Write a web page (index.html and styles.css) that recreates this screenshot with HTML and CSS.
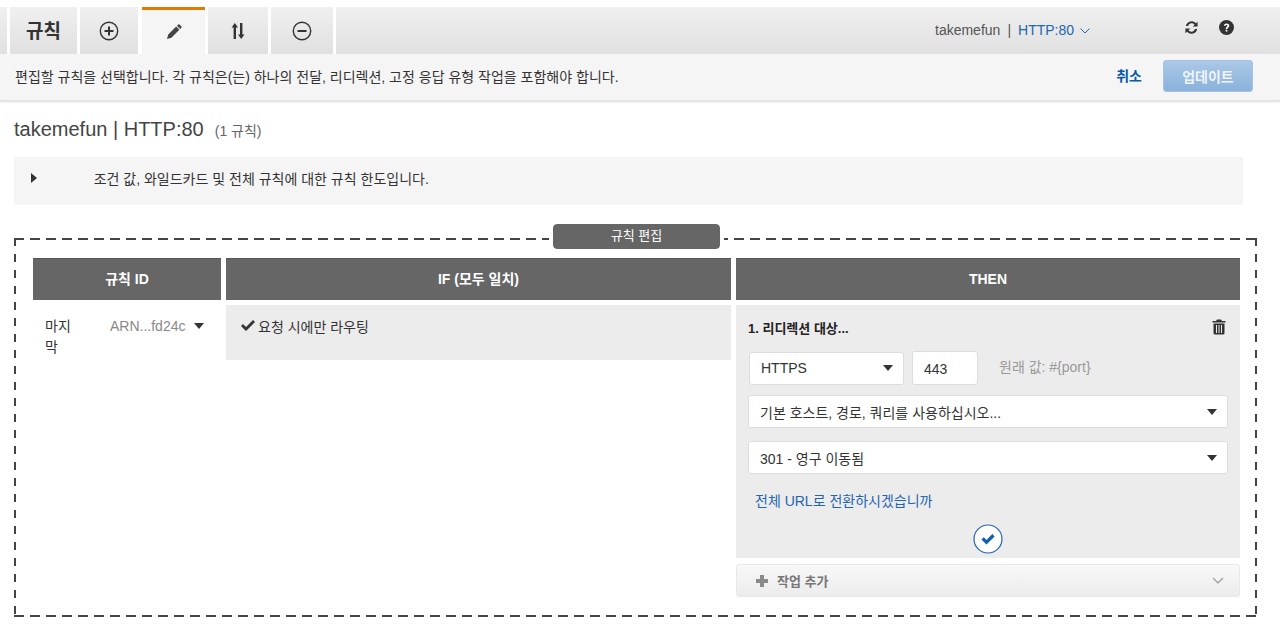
FILE: index.html
```html
<!DOCTYPE html>
<html lang="ko">
<head>
    <meta charset="UTF-8">
    <title>규칙 편집</title>
    <link rel="stylesheet" href="styles.css">
</head>
<body>

    <!-- Tab bar -->
    <div class="tabbar">
        <div class="tab tab-edge"></div>
        <div class="tab tab-title">규칙</div>
        <div class="tab tab-plus">
            <svg width="20" height="20" viewBox="0 0 20 20"><circle cx="10" cy="10" r="8.7" fill="none" stroke="#333" stroke-width="1.4"/><path d="M10 5.5v9M5.5 10h9" stroke="#333" stroke-width="2"/></svg>
        </div>
        <div class="tab tab-pencil active">
            <svg width="16" height="16" viewBox="0 0 16 16"><path d="M1 15l1.2-4.4 8-8 3.2 3.2-8 8zM11 1.8l1.2-1.2a1 1 0 0 1 1.3 0l1.9 1.9a1 1 0 0 1 0 1.3L14.200 5z" fill="#444"/></svg>
        </div>
        <div class="tab tab-sort">
            <svg width="14" height="18" viewBox="0 0 14 18"><path d="M3.800 1L7 5.500H5v11.500H2.600V5.500H.6zM10.200 17L7 12.500h2V1h2.400v11.500h2z" fill="#333"/></svg>
        </div>
        <div class="tab tab-minus">
            <svg width="20" height="20" viewBox="0 0 20 20"><circle cx="10" cy="10" r="8.700" fill="none" stroke="#333" stroke-width="1.400"/><path d="M5.500 10h9" stroke="#333" stroke-width="2"/></svg>
        </div>
        <div class="tab-rest">
            <div class="lb-name">
                takemefun<span class="lb-sep">|</span><span class="lb-port">HTTP:80</span>
                <svg width="10" height="6" viewBox="0 0 10 6"><path d="M.5.500L5 5l4.500-4.500" fill="none" stroke="#1f66b0" stroke-width="1"/></svg>
            </div>
            <svg class="icon-refresh" width="15" height="15" viewBox="0 0 16 16"><path d="M2 6.500A6.200 6.200 0 0 1 12.800 3.500L14.500 1.800V7H9.300l2-2A4 4 0 0 0 4.300 6.500zM14 9.500A6.200 6.200 0 0 1 3.200 12.500L1.500 14.200V9h5.200l-2 2a4 4 0 0 0 7-1.500z" fill="#333"/></svg>
            <svg class="icon-help" width="15" height="15" viewBox="0 0 16 16"><circle cx="8" cy="8" r="8" fill="#333"/><path d="M5.200 6.200C5.300 4.500 6.500 3.600 8.100 3.600c1.700 0 2.900 1 2.900 2.400 0 2-2.100 2-2.100 3.500H7.100C7.100 7.300 9 7.200 9 6.100c0-.6-.4-.9-1-.9-.7 0-1 .4-1.100 1z" fill="#fff"/><rect x="7.100" y="10.400" width="1.800" height="1.900" fill="#fff"/></svg>
        </div>
    </div>

    <!-- Action bar -->
    <div class="actionbar">
        <span class="action-text">편집할 규칙을 선택합니다. 각 규칙은(는) 하나의 전달, 리디렉션, 고정 응답 유형 작업을 포함해야 합니다.</span>
        <span class="cancel">취소</span>
        <button class="update">업데이트</button>
    </div>

    <div class="content">
        <h2 class="title">takemefun | HTTP:80<small>(1 규칙)</small></h2>

        <div class="info">
            <span class="caret-right"></span>
            조건 값, 와일드카드 및 전체 규칙에 대한 규칙 한도입니다.
        </div>

        <div class="editbox">
            <div class="pill">규칙 편집</div>
            <div class="rules">
                <div class="head">규칙 ID</div>
                <div class="head">IF (모두 일치)</div>
                <div class="head">THEN</div>

                <div class="rule-id">
                    <span class="rule-last">마지막</span>
                    <span class="rule-arn">ARN...fd24c</span>
                    <span class="caret rule-caret"></span>
                </div>

                <div class="if-cell">
                    <svg width="16" height="13" viewBox="0 0 16 13"><path d="M1 7l2-2 3 3 7-7 2 2-9 9z" fill="#333"/></svg>
                    요청 시에만 라우팅
                </div>

                <div class="then-col">
                    <div class="then-cell">
                        <div class="then-title">
                            <span>1. 리디렉션 대상...</span>
                            <svg width="14" height="16" viewBox="0 0 14 16"><path d="M5 .5h4l1 1.500h3.500v1.500H.5V2H4zM1.500 4.500h11V14a1.500 1.500 0 0 1-1.500 1.500H3A1.500 1.500 0 0 1 1.500 14z" fill="#333"/><path d="M4.500 6v8M7 6v8M9.500 6v8" stroke="#ececec" stroke-width="1"/></svg>
                        </div>
                        <div class="row-port">
                            <div class="select select-proto">HTTPS<span class="caret"></span></div>
                            <div class="port-input">443</div>
                            <span class="port-hint">원래 값: #{port}</span>
                        </div>
                        <div class="select select-wide">기본 호스트, 경로, 쿼리를 사용하십시오...<span class="caret"></span></div>
                        <div class="select select-wide select-code">301 - 영구 이동됨<span class="caret"></span></div>
                        <a class="full-url">전체 URL로 전환하시겠습니까</a>
                        <div class="confirm">
                            <svg width="30" height="30" viewBox="0 0 30 30"><circle cx="15" cy="15" r="14" fill="#fff" stroke="#1f66b0" stroke-width="1.200"/><path d="M8.500 15.500l2.300-2.300 2.700 2.700 5.800-5.800 2.300 2.300-8.100 8.100z" fill="#0f5fb0"/></svg>
                        </div>
                    </div>
                    <div class="add-action">
                        <svg width="14" height="14" viewBox="0 0 14 14"><path d="M5 1h4v4h4v4H9v4H5V9H1V5h4z" fill="#8a8a8a"/></svg>
                        <span>작업 추가</span>
                        <svg class="add-chevron" width="12" height="7" viewBox="0 0 12 7"><path d="M1 1l5 5 5-5" fill="none" stroke="#999" stroke-width="1.200"/></svg>
                    </div>
                </div>
            </div>
        </div>
    </div>

</body>
</html>
```

FILE: styles.css
```css
* {
    box-sizing: border-box;
}
body {
    margin: 0;
    padding-top: 7px;
    background-color: #fff;
    color: #333;
    font-family: "Liberation Sans", "Noto Sans CJK KR", sans-serif;
    font-size: 14px;
    overflow: hidden;
}

/* Tab bar */
.tabbar {
    display: flex;
    gap: 3px;
    height: 47px;
}
.tab {
    display: flex;
    align-items: center;
    justify-content: center;
    background: linear-gradient(#f0f0f0, #e0e0e0);
}
.tab-edge { width: 7px; }
.tab-title { width: 67px; font-size: 19px; font-weight: bold; color: #333; padding-bottom: 2px; }
.tab-plus { width: 58px; margin-right: 1px; }
.tab-pencil { width: 63px; }
.tab-sort { width: 60px; }
.tab-minus { width: 62px; }
.tab.active {
    background: #f5f5f5;
    border-top: 3px solid #e07b00;
}
.tab-rest {
    flex: 1;
    display: flex;
    align-items: center;
    background: linear-gradient(#f0f0f0, #e0e0e0);
    padding-bottom: 2px;
}
.lb-name {
    margin-left: 599px;
    width: 249px;
    color: #555;
    white-space: nowrap;
}
.lb-name svg { margin-left: 2px; vertical-align: 1px; }
.lb-sep { margin: 0 7px; }
.lb-port { color: #1f66b0; }
.icon-refresh { margin-bottom: 4px; }
.icon-help { margin-left: 20px; margin-bottom: 4px; }

/* Action bar */
.actionbar {
    display: flex;
    align-items: center;
    height: 48px;
    padding: 0 27px 0 15px;
    background-color: #f5f5f5;
    border-bottom: 2px solid #e4e4e4;
    box-shadow: 0 1px 2px rgba(0, 0, 0, 0.06);
}
.action-text { flex: 1; padding-bottom: 2px; }
.cancel {
    color: #0b5aa8;
    font-weight: bold;
    margin-right: 21px;
    padding-bottom: 4px;
}
.update {
    width: 90px;
    height: 32px;
    margin-bottom: 3px;
    padding: 0;
    color: #eef4fa;
    font-family: inherit;
    font-size: 14px;
    font-weight: bold;
    background: linear-gradient(#abc8e6, #8ab2dc);
    border: 1px solid #a5c4e4;
    border-radius: 3px;
}

/* Main content */
.content {
    padding: 0 23px 0 14px;
}
.title {
    margin: 15px 0 0;
    height: 25px;
    font-size: 20px;
    line-height: 25px;
    font-weight: normal;
    color: #444;
}
.title small {
    margin-left: 11px;
    font-size: 14px;
    color: #666;
}
.info {
    display: flex;
    align-items: center;
    width: 1229px;
    height: 48px;
    margin-top: 15px;
    padding: 0 0 6px 17px;
    background-color: #f5f5f5;
    white-space: pre;
}
.caret-right {
    width: 0;
    height: 0;
    margin-right: 10px;
    border-left: 6px solid #333;
    border-top: 5px solid transparent;
    border-bottom: 5px solid transparent;
}

/* Dashed edit box */
.editbox {
    position: relative;
    width: 1243px;
    height: 379px;
    margin-top: 33px;
    padding: 20px 17px 0 19px;
    background-image:
        linear-gradient(to right, #444 10px, transparent 10px),
        linear-gradient(to right, #444 10px, transparent 10px),
        linear-gradient(#444 8px, transparent 8px),
        linear-gradient(#444 8px, transparent 8px);
    background-size: 16px 2px, 16px 2px, 2px 16px, 2px 16px;
    background-position: 0 0, 0 100%, 0 0, 100% 0;
    background-repeat: repeat-x, repeat-x, repeat-y, repeat-y;
}
.pill {
    position: absolute;
    top: -14px;
    left: 539px;
    width: 167px;
    height: 25px;
    line-height: 24px;
    text-align: center;
    font-size: 13px;
    color: #fff;
    background-color: #666;
    border-radius: 4px;
    outline: 4px solid #fff;
}

/* Rule grid */
.rules {
    display: grid;
    grid-template-columns: 188px 505px 504px;
    grid-template-rows: 42px auto;
    column-gap: 5px;
    row-gap: 5px;
    align-items: start;
}
.head {
    height: 42px;
    line-height: 40px;
    text-align: center;
    color: #fff;
    font-weight: bold;
    background-color: #666;
    border-top: 1px solid #555;
}
.rule-id {
    display: flex;
    padding: 11px 0 0 12px;
    line-height: 21px;
}
.rule-last { width: 31px; margin-right: 34px; }
.rule-arn { color: #888; }
.rule-caret { margin: 7px 0 0 9px; }
.caret {
    width: 0;
    height: 0;
    border-top: 6px solid #333;
    border-left: 5.500px solid transparent;
    border-right: 5.500px solid transparent;
}
.if-cell {
    display: flex;
    align-items: center;
    gap: 2px;
    height: 55px;
    padding: 0 0 14px 14px;
    background-color: #ececec;
}
.then-cell {
    height: 253px;
    padding: 12px 12px 0 12px;
    background-color: #ececec;
}
.then-title {
    display: flex;
    justify-content: space-between;
    align-items: center;
    height: 20px;
    padding-right: 2px;
    font-weight: bold;
    font-size: 13px;
    color: #222;
}
.row-port {
    display: flex;
    align-items: center;
    margin-top: 14px;
}
.select {
    display: flex;
    align-items: center;
    justify-content: space-between;
    height: 33px;
    padding: 0 10px 0 11px;
    background-color: #fff;
    border: 1px solid #ddd;
    border-radius: 3px;
}
.select-proto { width: 155px; margin-left: 1px; }
.port-input {
    width: 66px;
    height: 34px;
    margin-left: 8px;
    padding-left: 11px;
    line-height: 34px;
    background-color: #fff;
    border: 1px solid #ddd;
    border-radius: 3px;
}
.port-hint {
    margin: 0 0 4px 21px;
    color: #999;
}
.select-wide { width: 480px; margin-top: 10px; }
.select-code { margin-top: 13px; }
.full-url {
    display: block;
    margin: 16px 0 0 7px;
    color: #1f66b0;
}
.confirm {
    display: flex;
    justify-content: center;
    margin-top: 14px;
}
.add-action {
    display: flex;
    align-items: center;
    height: 33px;
    margin-top: 6px;
    padding-left: 18px;
    color: #777;
    font-weight: bold;
    font-size: 13px;
    background: linear-gradient(#f8f8f8, #ececec);
    border: 1px solid #e8e8e8;
    border-radius: 3px;
}
.add-action span { margin-left: 8px; }
.add-chevron { margin-left: auto; margin-right: 15px; }
```
